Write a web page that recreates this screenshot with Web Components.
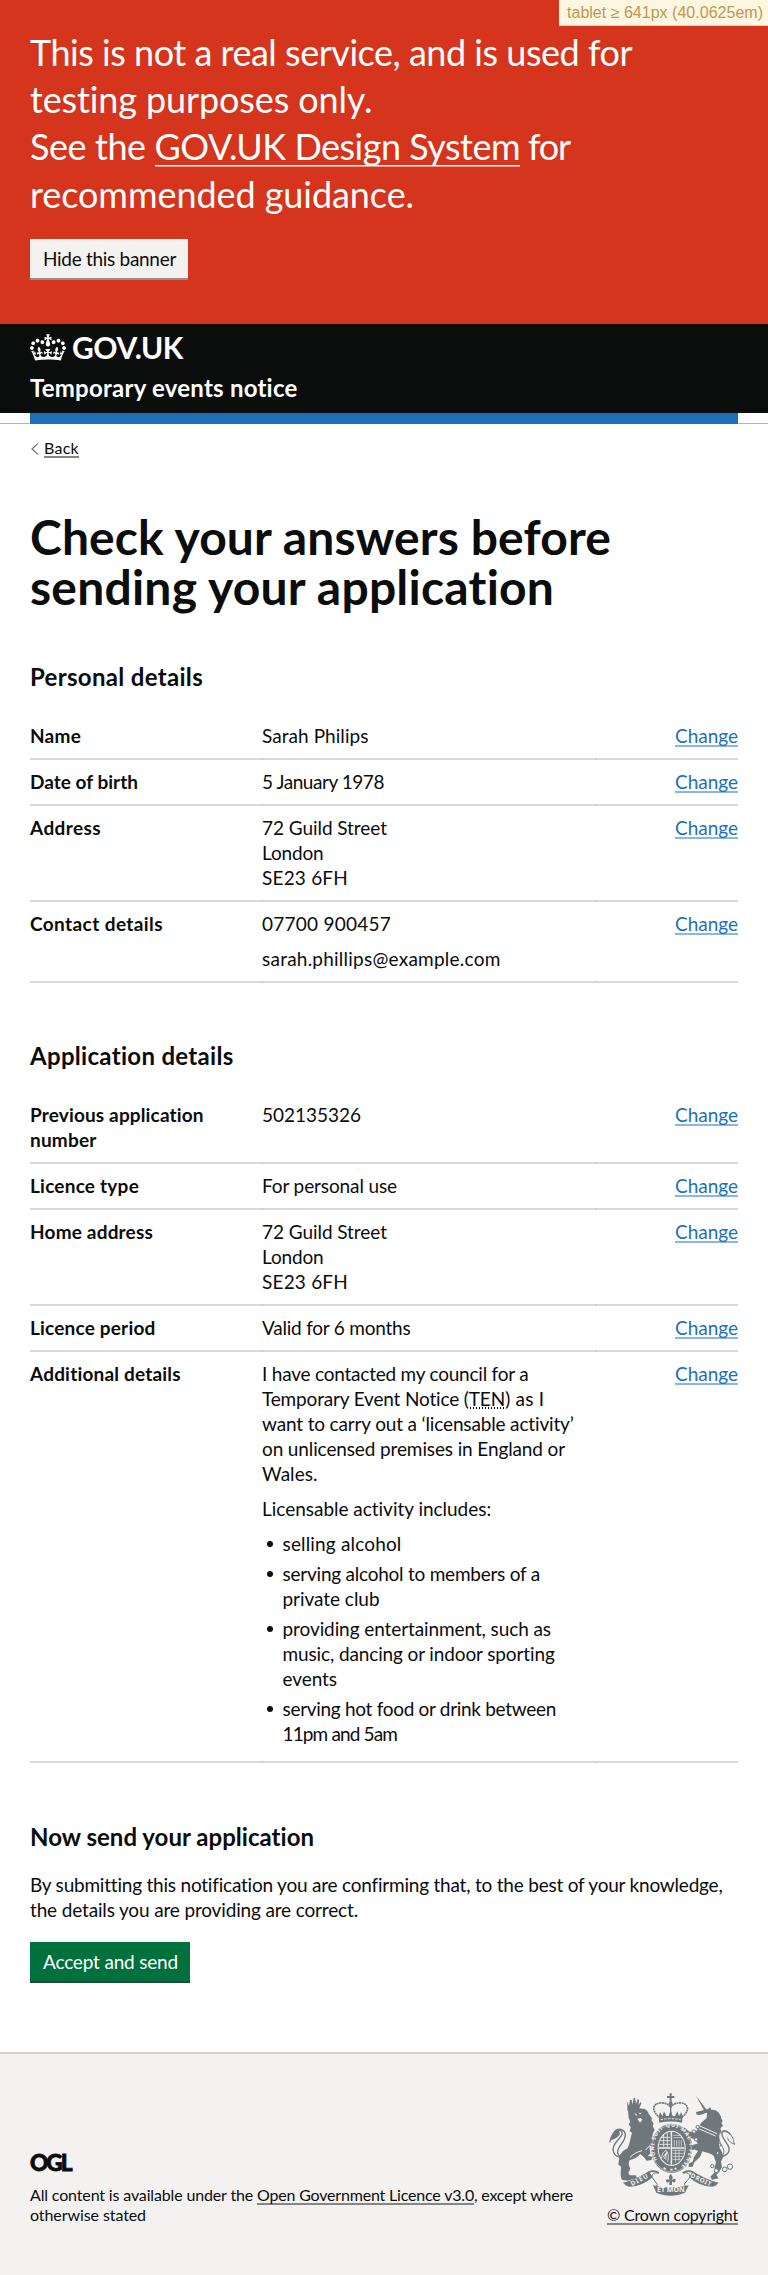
<!DOCTYPE html>
<html lang="en">
<head>
<meta charset="utf-8">
<title>Check your answers before sending your application</title>
<style>
body{margin:0;background:#fff;color:#0b0c0c;font-family:Lato,"Noto Sans",sans-serif}
</style>
</head>
<body>
<tn-page></tn-page>
<script>
const define=(name,html,setup)=>customElements.define(name,class extends HTMLElement{
  constructor(){super();this.attachShadow({mode:'open'});}
  connectedCallback(){
    if(this.shadowRoot.firstChild)return;
    const t=document.createElement('template');
    t.innerHTML=html;
    this.shadowRoot.append(t.content.cloneNode(true));
    if(setup)setup(this,this.shadowRoot);
  }
});

/* One line of text, tracked so that it runs to the given measure. */
define('tn-line',`<style>
:host{display:block;white-space:pre;width:max-content}
span{display:inline-block}
</style><span><slot></slot></span>`,(host,root)=>{
  const w=parseFloat(host.getAttribute('w'));
  const n=[...host.textContent].length;
  if(!w||!n)return;
  const span=root.querySelector('span');
  const natural=span.getBoundingClientRect().width;
  span.style.letterSpacing=((w-natural)/n)+'px';
});

define('tn-link',`<style>
:host{display:inline-block}
a{color:inherit;text-decoration:none;display:block;
  background:linear-gradient(var(--rule,#858585),var(--rule,#858585)) 0 var(--rule-y,22px)/100% var(--rule-h,2px) no-repeat}
</style><a><slot></slot></a>`);

define('tn-button',`<style>
:host{display:flex;box-sizing:border-box;height:39px;padding:0 0 0 13px;align-items:flex-start;font-size:19px;line-height:25px;
 background:var(--bg);color:var(--fg);box-shadow:0 2px 0 var(--shade)}
slot{display:block;margin-top:7px}
</style><slot></slot>`);

define('tn-breakpoint',`<style>
:host{position:absolute;top:0;right:0;box-sizing:border-box;width:209px;height:26px;padding:3px 0 0 8px;background:#fdf6e0;border-bottom:1px solid #f0d2b0;
 color:#bf9853;font:16px/19px "Liberation Sans",Arial,sans-serif}
</style><tn-line w="196">tablet ≥ 641px (40.0625em)</tn-line>`);

define('tn-banner',`<style>
:host{display:block;box-sizing:border-box;height:323.6px;padding:28.5px 30px 0;background:#d4351c;color:#fff;font-size:36px;line-height:47.4px}
.row{display:flex}
tn-link{--rule:#fff;--rule-y:42px;--rule-h:1.5px}
tn-button{width:158px;margin-top:21.3px;--bg:#f3f2f1;--fg:#0b0c0c;--shade:#929191}
</style>
<tn-line w="602">This is not a real service, and is used for</tn-line>
<tn-line w="343">testing purposes only.</tn-line>
<div class="row"><tn-line w="124.5">See the </tn-line><tn-link><tn-line w="365.5">GOV.UK Design System</tn-line></tn-link><tn-line w="50"> for</tn-line></div>
<tn-line w="384">recommended guidance.</tn-line>
<tn-button><tn-line w="133">Hide this banner</tn-line></tn-button>`);

define('tn-header',`<style>
:host{display:block}
.bar{box-sizing:border-box;height:89.8px;padding:10.4px 30px 0;background:#0b0c0c;color:#fff;font-weight:700}
.logo{display:flex;height:28px;align-items:flex-start}
svg{display:block;margin-right:6px}
.logo tn-line{font-size:30px;line-height:28px;margin-top:-1px}
.name{font-size:24px;line-height:30px;margin-top:10.8px}
.under{height:9.6px;padding:0 30px;border-bottom:1px solid #b1b4b6}
.blue{height:10.6px;background:#1d70b8}
</style>
<div class="bar"><div class="logo">
<svg width="36" height="27" viewBox="0 0 132 97" fill="#fff"><path d="M25 30.2c3.5 1.5 7.7-.2 9.1-3.7 1.5-3.6-.2-7.8-3.9-9.2-3.6-1.4-7.6.3-9.1 3.9-1.4 3.5.3 7.5 3.9 9zM9 39.5c3.6 1.5 7.8-.2 9.2-3.7 1.5-3.6-.2-7.8-3.9-9.1-3.6-1.5-7.6.2-9.1 3.8-1.4 3.5.3 7.5 3.8 9zM4.4 57.2c3.5 1.5 7.7-.2 9.1-3.8 1.5-3.6-.2-7.7-3.9-9.1-3.5-1.5-7.6.3-9.1 3.8-1.4 3.5.3 7.6 3.9 9.1zm38.3-21.4c3.5 1.5 7.7-.2 9.1-3.8 1.5-3.6-.2-7.7-3.9-9.1-3.6-1.5-7.6.3-9.1 3.8-1.3 3.6.4 7.7 3.9 9.1zm64.4-5.6c-3.6 1.5-7.8-.2-9.1-3.7-1.5-3.6.2-7.8 3.8-9.2 3.6-1.4 7.7.3 9.2 3.9 1.3 3.5-.4 7.5-3.9 9zm15.9 9.3c-3.6 1.5-7.7-.2-9.1-3.7-1.5-3.6.2-7.8 3.7-9.1 3.6-1.5 7.7.2 9.2 3.8 1.5 3.5-.3 7.5-3.8 9zm4.7 17.7c-3.6 1.5-7.8-.2-9.2-3.8-1.5-3.6.2-7.7 3.9-9.1 3.6-1.5 7.7.3 9.2 3.8 1.3 3.5-.4 7.6-3.9 9.1zM89.3 35.8c-3.6 1.5-7.8-.2-9.2-3.8-1.4-3.6.2-7.7 3.9-9.1 3.6-1.5 7.7.3 9.2 3.8 1.4 3.6-.3 7.7-3.9 9.1zM69.7 17.7l8.9 4.7V9.3l-8.9 2.8c-.2-.3-.5-.6-.9-.9L72.4 0H59.6l3.5 11.2c-.3.3-.6.5-.9.9l-8.8-2.8v13.1l8.8-4.7c.3.3.6.7.9.9l-5 15.4v.1c-.2.8-.4 1.6-.4 2.4 0 4.1 3.1 7.5 7 8.1h.2c.3 0 .7.1 1 .1.4 0 .7 0 1-.1h.2c4-.6 7.1-4.1 7.1-8.1 0-.8-.1-1.7-.4-2.4V34l-5.1-15.4c.4-.2.7-.6 1-.9zM66 92.8c16.9 0 32.8 1.1 47.1 3.2 4-16.9 8.9-26.7 14-33.5l-9.6-3.4c1 4.9 1.1 7.2 0 10.2-1.5-1.4-3-4.3-4.2-8.7L108.6 76c2.8-2 5-3.2 7.5-3.3-4.4 9.4-10 11.9-13.6 11.2-4.3-.8-6.3-4.6-5.6-7.9 1-4.7 5.7-5.9 8-.5 4.3-8.7-3-11.4-7.6-8.8 7.1-7.2 7.9-13.5 2.1-21.1-8 6.1-8.1 12.3-4.5 20.8-4.7-5.4-12.1-2.5-9.5 6.2 3.4-5.2 7.9-2 7.2 3.1-.6 4.3-6.4 7.8-13.5 7.2-10.3-.9-10.9-8-11.2-13.8 2.5-.5 7.1 1.8 11 7.3L80.2 60c-4.1 4.4-8 5.3-12.3 5.4 1.4-4.4 8-11.6 8-11.6H55.5s6.4 7.2 7.9 11.6c-4.2-.1-8-1-12.3-5.4l1.4 16.4c3.9-5.5 8.5-7.7 10.9-7.3-.3 5.8-.9 12.8-11.1 13.8-7.2.6-12.9-2.9-13.5-7.2-.7-5 3.8-8.3 7.1-3.1 2.7-8.7-4.6-11.6-9.4-6.2 3.7-8.5 3.6-14.7-4.6-20.8-5.8 7.6-5 13.9 2.2 21.1-4.7-2.6-11.9.1-7.7 8.8 2.3-5.5 7.1-4.2 8.1.5.7 3.3-1.3 7.1-5.7 7.9-3.5.7-9-1.8-13.5-11.2 2.5.1 4.7 1.3 7.5 3.3l-4.7-15.4c-1.2 4.4-2.7 7.2-4.3 8.7-1.1-3-.9-5.3 0-10.2l-9.5 3.4c5 6.9 9.9 16.7 14 33.5 14.8-2.1 30.8-3.2 47.7-3.2z"/></svg>
<tn-line w="111">GOV.UK</tn-line></div>
<tn-line class="name" w="268">Temporary events notice</tn-line></div>
<div class="under"><div class="blue"></div></div>`);

define('tn-back',`<style>
:host{display:flex;align-items:flex-start;font-size:16px;line-height:20px;height:24px}
svg{display:block;margin:5px 5px 0 1px}
tn-link{--rule-y:18px}
</style><svg width="8" height="12" viewBox="0 0 8 12" fill="none" stroke="#6f7475" stroke-width="1.2"><path d="M6.8.6 1 6l5.8 5.4"/></svg><tn-link><tn-line w="35">Back</tn-line></tn-link>`);

define('tn-row',`<style>
:host{display:grid;grid-template-columns:232px 334px 1fr;padding:9px 0 10px;border-bottom:2px solid #d8d9d9;font-size:19px;line-height:25px;position:relative}
.k{font-weight:700}
.v{display:flex;flex-direction:column;gap:10px}
.a{justify-self:end;color:#1d70b8}
tn-link{--rule:#8eb7db}
:host::after{content:"";position:absolute;left:232px;width:334px;height:2px;bottom:-2px;box-sizing:border-box;border:solid #bfc2c3;border-width:0 1px}
</style>
<div class="k"><slot name="key"></slot></div><div class="v"><slot></slot></div>
<div class="a"><tn-link><tn-line w="63">Change</tn-line></tn-link></div>`);

define('tn-heading',`<style>:host{display:block;font-weight:700;font-size:24px;line-height:30px}</style><slot></slot>`);

define('tn-bullet',`<style>
:host{display:grid;grid-template-columns:20.5px 1fr}
i{width:6px;height:6px;border-radius:50%;background:currentColor;margin:10.5px 0 0 5px}
</style><i></i><div><slot></slot></div>`);

define('tn-crest',`<style>:host{display:block;width:127px;height:104px}svg{display:block}text{font:700 19px "Noto Sans",sans-serif;fill:#f3f2f1}</style>
<svg width="127" height="104" viewBox="57 36 381 312" fill="#6f777b" stroke="none">
<!-- lion -->
<path d="M112 64l5 14 3-18 5 0 2 14 4-20 4 0 3 18 5-15 4 2-1 16 6-10 2 5-7 18-35 4z"/>
<path d="M114 92c10-7 30-10 42-6 12-1 17 7 20 15l10 14-2 6 7 10-3 7 6 12-5 8-3 20 8 14 12 2-1 12-18-3-9-8 3 26-8 6 14 3-2 10-16 2c-2-9-12-14-18-20-8 11-20 15-32 18-5 12-2 17 2 26l-6 12 4 8 18 0 4 8-28 8-18-3-3-15 1-24-8-6 3-26c9-14 12-16 25-24 8-18 9-35 13-46l-7-4 3-12-6-9 5-8-5-12z"/>
<path d="M93 232c-22-2-29-22-19-39 9-16 27-26 22-37-4-8-15-8-20 0" fill="none" stroke="#6f777b" stroke-width="4"/>
<path d="M93 232c-14-9-12-20-5-31 10-14 20-25 18-39-3-14-17-18-28-11-6 5-14 17-19 36" fill="none" stroke="#6f777b" stroke-width="4"/>
<path d="M62 181c5-18 8-30 24-30 10 13-4 25-24 30z"/>
<path d="M133 100l8 3-2 5zM147 98l8 0-5 6zM142 116l10-2 5 5-7 9z" fill="#f3f2f1"/>
<path d="M120 232c10-10 22-17 36-20M178 198l-11 12" fill="none" stroke="#f3f2f1" stroke-width="3"/>
<!-- unicorn -->
<path d="M318 47l32 42-7 4z"/>
<path d="M343 90c8-3 13-3 17-9l4 8c19-1 28 13 30 27l4 7-4 6 5 8-8 8 3 8-8 12c4 17 0 28 3 40 8 9 9 17 10 27l-6 13 3 16-8 14-9 10 7 10-20 4-5-9 14-14-1-15 4-14-7-20c-12-8-21-8-34-13l-7 17-17 16-5 13-12 1 0-10 12-6 4-14 12-18-11-5-19 9-2 16-9-1-1-20 24-17 17-4-6-12-23-8-11-16-11-2-1-9 14-1 13 12 21-1 6-10 8-15 17-15 1-16-21 7-10-1-2-8z"/>
<path d="M327 137l54 24M326 146l51 22" stroke="#f3f2f1" stroke-width="3"/>
<path d="M392 231c24-5 30-20 22-35-10-17-22-28-18-39 6-12 20 0 25 7" fill="none" stroke="#6f777b" stroke-width="4"/>
<path d="M392 231c14-10 10-21 4-33-8-13-14-30-6-38 10-10 26-4 31 2 11 15 8 16 13 31-14-6-19-9-21-20" fill="none" stroke="#6f777b" stroke-width="3"/>
<g fill="#f3f2f1" stroke="#6f777b" stroke-width="3"><circle cx="367" cy="258" r="5"/><circle cx="379" cy="272" r="6"/><circle cx="404" cy="268" r="7"/><circle cx="420" cy="260" r="8"/><circle cx="323" cy="141" r="5"/><circle cx="312" cy="155" r="5"/><circle cx="318" cy="178" r="5"/><circle cx="389" cy="195" r="4"/><circle cx="383" cy="219" r="4"/></g>
<circle cx="347" cy="102" r="2.5" fill="#f3f2f1"/>
<!-- crown -->
<path d="M239 40h6v8h8v6h-8v14h-6V54h-8v-6h8z"/><circle cx="242" cy="71" r="6"/>
<path d="M211 113c-28-18-24-43 0-44 13-1 23 2 31 13 8-11 18-14 31-13 24 1 28 26 0 44" fill="none" stroke="#6f777b" stroke-width="5" stroke-dasharray="6 1.5"/>
<path d="M242 74v30" stroke="#6f777b" stroke-width="4"/>
<path d="M206 110l4-14 7 12 5-14 7 14 7 0 6-18 6 18 7 0 7-14 5 14 7-12 4 14-2 18c-22-5-46-5-68 0z"/>
<path d="M212 119q30-6 60 0" fill="none" stroke="#f3f2f1" stroke-width="3" stroke-dasharray="7 4"/>
<!-- garter and shield -->
<ellipse cx="245" cy="205" rx="62" ry="74"/>
<ellipse cx="245" cy="205" rx="59" ry="71" fill="none" stroke="#f3f2f1" stroke-width="1.5"/>
<ellipse cx="245" cy="205" rx="42" ry="53" fill="#f3f2f1"/>
<ellipse cx="245" cy="205" rx="39" ry="50"/>
<path d="M244 156v98M207 204h76" stroke="#f3f2f1" stroke-width="5"/>
<path d="M213 172h28M210 182h31M208 193h33M221 162v39M232 158v43" stroke="#f3f2f1" stroke-width="2.5"/>
<path d="M250 166h22M250 173h27M253 180v20M260 180v20M267 180v20M274 180v20M248 211h34M248 220h33M248 229h30M248 238h24M257 209v38M267 209v33" stroke="#f3f2f1" stroke-width="2"/>
<path d="M214 234c4-12 4-20 15-22 8 10 6 24 4 34M219 232l12-17M222 237l9-20M228 239v-20" fill="none" stroke="#f3f2f1" stroke-width="2.5"/>
<path d="M242 165v78" stroke="#6f777b" stroke-width="1.5"/>
<path id="ring" d="M201 240C181 198 199 150 232 142C274 132 308 178 295 220C293 234 283 250 275 258" fill="none"/>
<text style="font-size:16px"><textPath href="#ring" textLength="282">HONI SOIT QUI MAL Y PENSE</textPath></text>
<path d="M221 263l6 5M241 269h7M259 264l-5 4" stroke="#f3f2f1" stroke-width="5"/>
<!-- ribbons and plant -->
<path d="M205 279c-13-2-22 4-18 14l15 20c-5 8-3 13 0 18 26 13 57 12 82 0 4-6 3-14-1-19l15-18c5-10-4-18-17-15" fill="#f3f2f1" stroke="#6f777b" stroke-width="3"/>
<path d="M189 316c35 9 72 9 107 0l-11 22c-28 12-58 12-86 0z"/>
<path d="M98 308c24-4 54-18 78-34l12 17c-18 17-44 29-70 29zM387 308c-24-4-54-18-78-34l-12 17c18 17 44 29 70 29z"/>
<path d="M176 277c12-6 22-4 31 2M309 277c-12-6-22-4-31 2M119 318l-14-5M366 318l14-5" fill="none" stroke="#6f777b" stroke-width="5"/>
<path d="M242 282c-8 9-5 14-1 20-9-10-17-1-11 5 4 2 7-2 8-5v13h8v-13c2 5 6 7 10 3 4-8-4-13-12-3 5-7 6-12-2-20z"/>
<text x="201" y="337" textLength="83" lengthAdjust="spacingAndGlyphs" style="font-size:20px">ET MON</text>
<text transform="translate(126 318) rotate(-27)" textLength="56">DIEU</text>
<text transform="translate(300 291) rotate(25)" textLength="66">DROIT</text>
</svg>`);

define('tn-footer',`<style>
:host{display:flex;box-sizing:border-box;height:223px;border-top:2px solid #d3d4d4;background:#f3f2f1;padding:38px 30px 0;font-size:16px;line-height:20px;justify-content:space-between}
.ogl{margin:58px 0 9px;height:26px;font:900 22.6px/26px Lato,Inter,sans-serif;-webkit-text-stroke:.8px #0b0c0c}
.row{display:flex}
tn-link{--rule-y:18px}
.right{display:flex;flex-direction:column;align-items:center;gap:8.7px}
</style>
<div class="left"><tn-line class="ogl" w="40.5">OGL</tn-line>
<div class="row"><tn-line w="227">All content is available under the </tn-line><tn-link><tn-line w="217">Open Government Licence v3.0</tn-line></tn-link><tn-line w="99">, except where</tn-line></div>
<tn-line w="116">otherwise stated</tn-line></div>
<div class="right"><tn-crest></tn-crest><tn-link><tn-line w="131">© Crown copyright</tn-line></tn-link></div>`);

define('tn-page',`<style>
:host{display:block;position:relative;width:768px;height:2275px;overflow:hidden}
main{display:flex;flex-direction:column;padding:0 30px;height:1628px;box-sizing:border-box}
tn-back{margin-top:13.6px}
h1{margin:50px 0 0;height:150.8px;font-size:48px;line-height:50px;font-weight:700}
.list{margin:21.6px 0 58.4px}
.list.two{margin-bottom:59px}
ul{display:flex;flex-direction:column;gap:5px;margin:0 0 5px;padding:0;list-style:none}
.flex{display:flex}
abbr{display:block;background:radial-gradient(circle,#0b0c0c 0.8px,transparent 1.1px) 0 21px/3px 2px repeat-x}
p{margin:20px 0;font-size:19px;line-height:25px}
.send{align-self:flex-start;width:160px;--bg:#00703c;--fg:#fff;--shade:#1f4c37}
</style>
<tn-banner></tn-banner>
<tn-breakpoint></tn-breakpoint>
<tn-header></tn-header>
<main>
<tn-back></tn-back>
<h1><tn-line w="581">Check your answers before</tn-line><tn-line w="525">sending your application</tn-line></h1>
<tn-heading><tn-line w="173">Personal details</tn-line></tn-heading>
<div class="list">
<tn-row><tn-line slot="key" w="51">Name</tn-line><tn-line w="106.5">Sarah Philips</tn-line></tn-row>
<tn-row><tn-line slot="key" w="108">Date of birth</tn-line><tn-line w="122">5 January 1978</tn-line></tn-row>
<tn-row><tn-line slot="key" w="71">Address</tn-line><div><tn-line w="125">72 Guild Street</tn-line><tn-line w="61.5">London</tn-line><tn-line w="86">SE23 6FH</tn-line></div></tn-row>
<tn-row><tn-line slot="key" w="133">Contact details</tn-line><tn-line w="129">07700 900457</tn-line><tn-line w="238.5">sarah.phillips@example.com</tn-line></tn-row>
</div>
<tn-heading><tn-line w="204">Application details</tn-line></tn-heading>
<div class="list two">
<tn-row><div slot="key"><tn-line w="174">Previous application</tn-line><tn-line w="66.5">number</tn-line></div><tn-line w="99">502135326</tn-line></tn-row>
<tn-row><tn-line slot="key" w="109">Licence type</tn-line><tn-line w="135">For personal use</tn-line></tn-row>
<tn-row><tn-line slot="key" w="123">Home address</tn-line><div><tn-line w="125">72 Guild Street</tn-line><tn-line w="61.5">London</tn-line><tn-line w="86">SE23 6FH</tn-line></div></tn-row>
<tn-row><tn-line slot="key" w="125.5">Licence period</tn-line><tn-line w="148.5">Valid for 6 months</tn-line></tn-row>
<tn-row><tn-line slot="key" w="151">Additional details</tn-line>
<div><tn-line w="266.5">I have contacted my council for a</tn-line><div class="flex"><tn-line w="207">Temporary Event Notice (</tn-line><abbr><tn-line w="36.5">TEN</tn-line></abbr><tn-line w="39">) as I</tn-line></div><tn-line w="312">want to carry out a ‘licensable activity’</tn-line><tn-line w="303">on unlicensed premises in England or</tn-line><tn-line w="55.5">Wales.</tn-line></div>
<tn-line w="229.5">Licensable activity includes:</tn-line>
<ul>
<tn-bullet><tn-line w="119">selling alcohol</tn-line></tn-bullet>
<tn-bullet><tn-line w="257.5">serving alcohol to members of a</tn-line><tn-line w="97">private club</tn-line></tn-bullet>
<tn-bullet><tn-line w="268.5">providing entertainment, such as</tn-line><tn-line w="272.5">music, dancing or indoor sporting</tn-line><tn-line w="54.5">events</tn-line></tn-bullet>
<tn-bullet><tn-line w="273.5">serving hot food or drink between</tn-line><tn-line w="114.5">11pm and 5am</tn-line></tn-bullet>
</ul></tn-row>
</div>
<tn-heading><tn-line w="284.5">Now send your application</tn-line></tn-heading>
<p><tn-line w="692">By submitting this notification you are confirming that, to the best of your knowledge,</tn-line><tn-line w="328">the details you are providing are correct.</tn-line></p>
<tn-button class="send"><tn-line w="135">Accept and send</tn-line></tn-button>
</main>
<tn-footer></tn-footer>`);
</script>
</body>
</html>
